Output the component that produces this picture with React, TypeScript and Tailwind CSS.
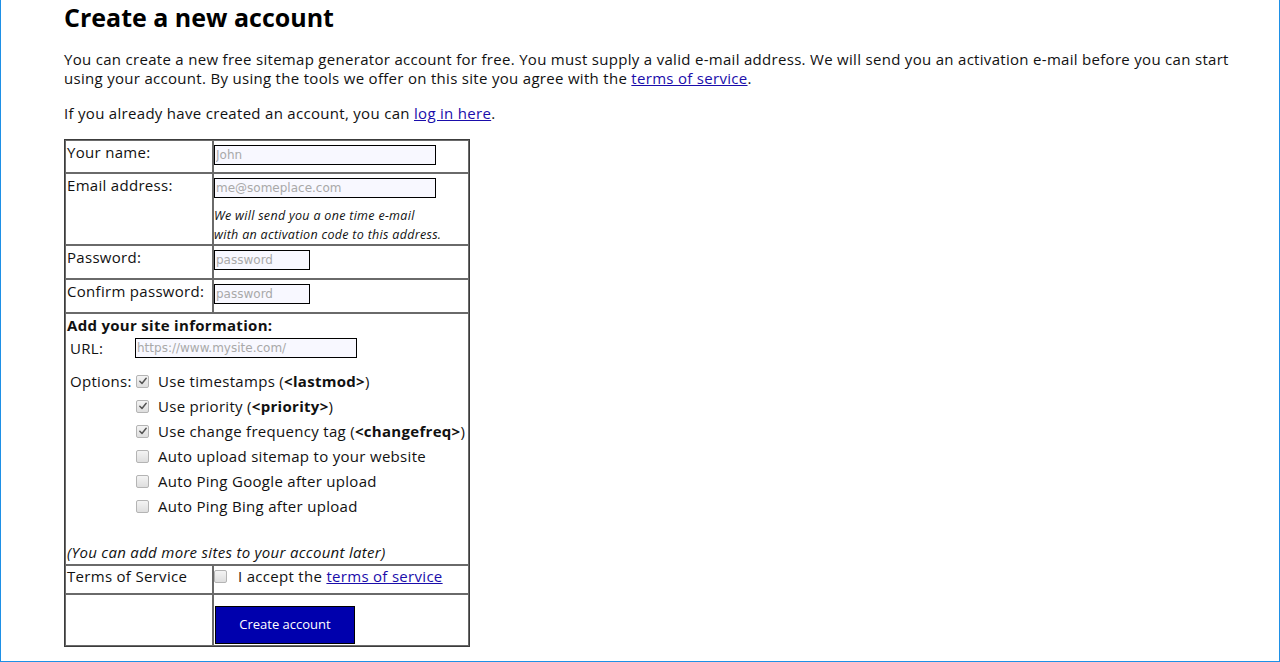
import React from 'react'

function Box({ checked = false }: { checked?: boolean }) {
  return (
    <span className="inline-flex h-[13px] w-[13px] shrink-0 items-center justify-center rounded-[2px] border border-[#b4b4b4] bg-gradient-to-b from-[#f4f4f4] to-[#dedede]">
      {checked && (
        <svg viewBox="0 0 12 12" className="h-[10px] w-[10px]">
          <path d="M2.2 6.4 L4.8 9 L9.8 2.8" fill="none" stroke="#555" strokeWidth="1.8" strokeLinecap="round" strokeLinejoin="round" />
        </svg>
      )}
    </span>
  )
}

function Field({ placeholder, width }: { placeholder: string; width: string }) {
  return (
    <input
      placeholder={placeholder}
      className={`${width} h-[20px] border border-black bg-[#f8f8ff] px-[1px] font-['DejaVu_Sans',sans-serif] text-[12px] tracking-normal text-black placeholder:text-[#a9a9a9] outline-none`}
    />
  )
}

const options: { label: React.ReactNode; checked: boolean }[] = [
  { label: <>Use timestamps (<b>&lt;lastmod&gt;</b>)</>, checked: true },
  { label: <>Use priority (<b>&lt;priority&gt;</b>)</>, checked: true },
  { label: <>Use change frequency tag (<b>&lt;changefreq&gt;</b>)</>, checked: true },
  { label: 'Auto upload sitemap to your website', checked: false },
  { label: 'Auto Ping Google after upload', checked: false },
  { label: 'Auto Ping Bing after upload', checked: false },
]

export default function App() {
  const cell = 'border border-[#6a6a6a] p-0 align-top'
  return (
    <div className="h-[662px] overflow-hidden border-x border-b border-[#1e90e6] bg-white font-['Open_Sans',sans-serif] text-[15px] tracking-[0.3px] text-[#111]">
      <div className="pl-[63px] pt-[1px]">
        <h1 className="text-[25px] font-bold leading-[32px] tracking-normal text-black">Create a new account</h1>

        <p className="mt-[17px] leading-[19px]">
          You can create a new free sitemap generator account for free. You must supply a valid e-mail address. We will send you an activation e-mail before you can start
          <br />
          using your account. By using the tools we offer on this site you agree with the{' '}
          <a href="#" className="text-[#1a0dab] underline">terms of service</a>.
        </p>

        <p className="mt-[16px] leading-[19px]">
          If you already have created an account, you can{' '}
          <a href="#" className="text-[#1a0dab] underline">log in here</a>.
        </p>

        {/* signup table */}
        <table className="mt-[16px] w-[406px] border-separate border-spacing-0 border border-[#3c3c3c]">
          <tbody>
            <tr>
              <td className={`${cell} w-[148px]`}>
                <div className="h-[31px] pl-[1px] leading-[22px]">Your name:</div>
              </td>
              <td className={cell}>
                <div className="h-[31px] pt-[1px]">
                  <Field placeholder="John" width="w-[222px]" />
                </div>
              </td>
            </tr>
            <tr>
              <td className={cell}>
                <div className="h-[70px] pl-[1px] leading-[22px]">Email address:</div>
              </td>
              <td className={cell}>
                <div className="h-[70px] pt-[1px]">
                  <Field placeholder="me@someplace.com" width="w-[222px]" />
                  <p className="mt-[8px] text-[12.5px] italic leading-[19px]">
                    We will send you a one time e-mail
                    <br />
                    with an activation code to this address.
                  </p>
                </div>
              </td>
            </tr>
            <tr>
              <td className={cell}>
                <div className="h-[32px] pl-[1px] leading-[22px]">Password:</div>
              </td>
              <td className={cell}>
                <div className="h-[32px] pt-[1px]">
                  <Field placeholder="password" width="w-[96px]" />
                </div>
              </td>
            </tr>
            <tr>
              <td className={cell}>
                <div className="h-[32px] pl-[1px] leading-[22px]">Confirm password:</div>
              </td>
              <td className={cell}>
                <div className="h-[32px] pt-[1px]">
                  <Field placeholder="password" width="w-[96px]" />
                </div>
              </td>
            </tr>
            <tr>
              <td className={cell} colSpan={2}>
                <div className="flex h-[250px] flex-col pl-[1px]">
                  <div className="font-bold leading-[22px]">Add your site information:</div>
                  <div className="mt-[1px] flex items-center pl-[3px]">
                    <span className="w-[65px]">URL:</span>
                    <Field placeholder="https://www.mysite.com/" width="w-[222px]" />
                  </div>
                  <div className="mt-[9px] flex pl-[3px]">
                    <span className="w-[66px] leading-[25px]">Options:</span>
                    <div className="flex flex-col">
                      {options.map((o, i) => (
                        <label key={i} className="flex h-[25px] items-center gap-[9px]">
                          <Box checked={o.checked} />
                          <span>{o.label}</span>
                        </label>
                      ))}
                    </div>
                  </div>
                  <div className="mt-auto pb-[1px] italic leading-[22px]">(You can add more sites to your account later)</div>
                </div>
              </td>
            </tr>
            <tr>
              <td className={cell}>
                <div className="h-[27px] pl-[1px] leading-[20px]">Terms of Service</div>
              </td>
              <td className={cell}>
                <div className="flex h-[27px] items-start gap-[11px] pt-[4px]">
                  <Box />
                  <span className="-mt-[4px] leading-[20px]">
                    I accept the <a href="#" className="text-[#1a0dab] underline">terms of service</a>
                  </span>
                </div>
              </td>
            </tr>
            <tr>
              <td className={cell}>
                <div className="h-[50px]" />
              </td>
              <td className={cell}>
                <div className="h-[50px] pt-[11px] pl-[1px]">
                  <button className="h-[38px] w-[140px] border border-black bg-[#0000ad] text-[13px] tracking-normal text-white">
                    Create account
                  </button>
                </div>
              </td>
            </tr>
          </tbody>
        </table>
      </div>
    </div>
  )
}
